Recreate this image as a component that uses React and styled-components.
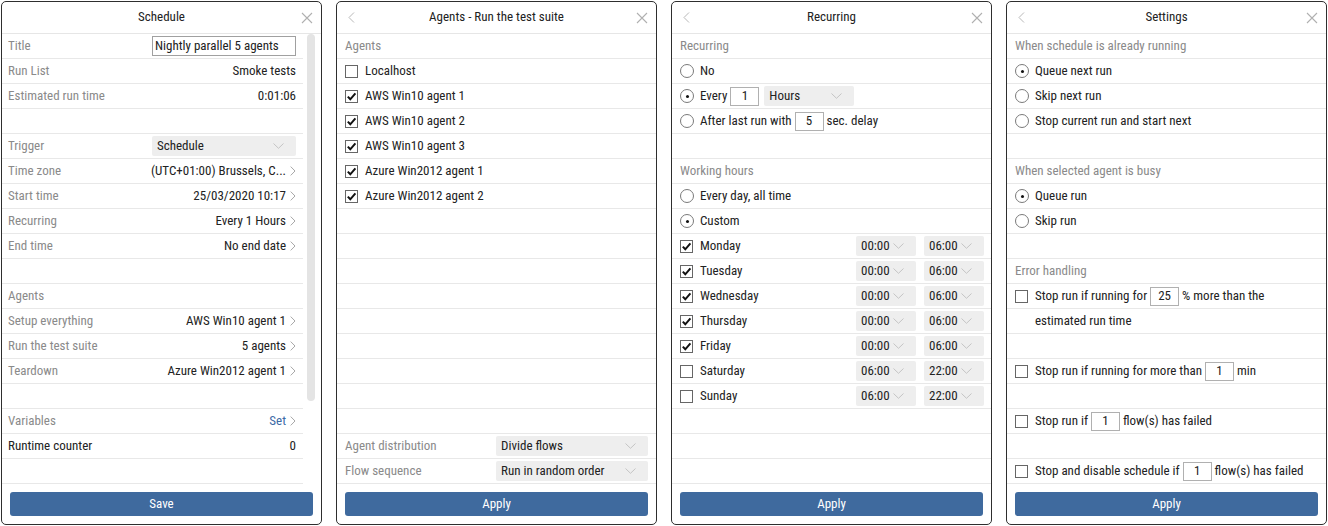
import styled, { createGlobalStyle } from 'styled-components';

const GlobalStyle = createGlobalStyle`
  body {
    margin: 0;
    background: #ffffff;
    font-family: "Roboto Condensed", Roboto, sans-serif;
    font-stretch: condensed;
    font-size: 13px;
    color: #222;
  }
`;

const CloseIcon = () => (
  <svg width="12" height="12" viewBox="0 0 12 12">
    <path d="M1 1 L11 11 M11 1 L1 11" stroke="#b0b0b0" strokeWidth="1.1" fill="none" />
  </svg>
);

const BackIcon = () => (
  <svg width="7" height="11" viewBox="0 0 7 11">
    <path d="M6 0.5 L1 5.5 L6 10.5" stroke="#b8b8b8" strokeWidth="1" fill="none" />
  </svg>
);

const RightIcon = () => (
  <svg width="6" height="10" viewBox="0 0 6 10">
    <path d="M0.7 0.6 L5 5 L0.7 9.4" stroke="#a8a8a8" strokeWidth="1" fill="none" />
  </svg>
);

const DownIcon = () => (
  <svg width="11" height="6" viewBox="0 0 11 6">
    <path d="M0.5 0.5 L5.5 5.3 L10.5 0.5" stroke="#c4c4c4" strokeWidth="1" fill="none" />
  </svg>
);

const Check = () => (
  <svg width="11" height="11" viewBox="0 0 11 11">
    <path d="M1.8 5.6 L4.3 8.3 L9.4 2.4" stroke="#111" strokeWidth="2" fill="none" />
  </svg>
);

const Panel = ({ title, back, children, footer }) => (
  <Card>
    <Header>
      <IconSlot>{back && <BackIcon />}</IconSlot>
      <Title>{title}</Title>
      <IconSlot>
        <CloseIcon />
      </IconSlot>
    </Header>
    {children}
    <Footer>
      <Button>
        <Caption>{footer}</Caption>
      </Button>
    </Footer>
  </Card>
);

const Checkbox = ({ checked }) => <Box>{checked && <Check />}</Box>;
const Radio = ({ checked }) => <Circle>{checked && <Dot />}</Circle>;
const Select = ({ w, children }) => (
  <SelectBox $w={w}>
    <Caption>{children}</Caption>
    <DownIcon />
  </SelectBox>
);

const Empty = ({ n, ...p }) =>
  Array.from({ length: n }).map((_, i) => <Row key={i} {...p} />);

const ScheduleRow = ({ label, value, link, dark, arrow }) => (
  <Row $pl={6} $pr={7}>
    <Label $dark={dark}>{label}</Label>
    <Value $link={link}>
      <Caption>{value}</Caption>
      {arrow && <RightIcon />}
    </Value>
  </Row>
);

const SchedulePanel = () => (
  <Panel title="Schedule" footer="Save">
    <Body>
      <List>
        <Row $pl={6} $pr={7}>
          <Label>Title</Label>
          <TextInput>
            <Caption>Nightly parallel 5 agents</Caption>
          </TextInput>
        </Row>
        <ScheduleRow label="Run List" value="Smoke tests" />
        <ScheduleRow label="Estimated run time" value="0:01:06" />
        <Row />
        <Row $pl={6} $pr={7}>
          <Label>Trigger</Label>
          <Select w={144}>Schedule</Select>
        </Row>
        <ScheduleRow label="Time zone" value="(UTC+01:00) Brussels, C..." arrow />
        <ScheduleRow label="Start time" value="25/03/2020 10:17" arrow />
        <ScheduleRow label="Recurring" value="Every 1 Hours" arrow />
        <ScheduleRow label="End time" value="No end date" arrow />
        <Row />
        <Row $pl={6}>
          <Label>Agents</Label>
        </Row>
        <ScheduleRow label="Setup everything" value="AWS Win10 agent 1" arrow />
        <ScheduleRow label="Run the test suite" value="5 agents" arrow />
        <ScheduleRow label="Teardown" value="Azure Win2012 agent 1" arrow />
        <Row />
        <ScheduleRow label="Variables" value="Set" link arrow />
        <ScheduleRow label="Runtime counter" value="0" dark />
        <Row />
      </List>
      <ScrollTrack>
        <Thumb />
      </ScrollTrack>
    </Body>
  </Panel>
);

const agents = [
  ['Localhost', false],
  ['AWS Win10 agent 1', true],
  ['AWS Win10 agent 2', true],
  ['AWS Win10 agent 3', true],
  ['Azure Win2012 agent 1', true],
  ['Azure Win2012 agent 2', true],
];

const AgentsPanel = () => (
  <Panel title="Agents - Run the test suite" back footer="Apply">
    <List>
      <Row>
        <Label>Agents</Label>
      </Row>
      {agents.map(([name, on]) => (
        <Row key={name}>
          <Checkbox checked={on} />
          <Text>{name}</Text>
        </Row>
      ))}
      <Empty n={9} />
      <Row>
        <Label>Agent distribution</Label>
        <Select w={152}>Divide flows</Select>
      </Row>
      <Row>
        <Label>Flow sequence</Label>
        <Select w={152}>Run in random order</Select>
      </Row>
    </List>
  </Panel>
);

const days = [
  ['Monday', true, '00:00', '06:00'],
  ['Tuesday', true, '00:00', '06:00'],
  ['Wednesday', true, '00:00', '06:00'],
  ['Thursday', true, '00:00', '06:00'],
  ['Friday', true, '00:00', '06:00'],
  ['Saturday', false, '06:00', '22:00'],
  ['Sunday', false, '06:00', '22:00'],
];

const RecurringPanel = () => (
  <Panel title="Recurring" back footer="Apply">
    <List>
      <Row>
        <Label>Recurring</Label>
      </Row>
      <Row>
        <Radio />
        <Text>No</Text>
      </Row>
      <Row>
        <Radio checked />
        <Text>Every</Text>
        <NumBox>
          <Caption>1</Caption>
        </NumBox>
        <Gap />
        <Select w={90}>Hours</Select>
      </Row>
      <Row>
        <Radio />
        <Text>After last run with</Text>
        <NumBox>
          <Caption>5</Caption>
        </NumBox>
        <Text>sec. delay</Text>
      </Row>
      <Row />
      <Row>
        <Label>Working hours</Label>
      </Row>
      <Row>
        <Radio />
        <Text>Every day, all time</Text>
      </Row>
      <Row>
        <Radio checked />
        <Text>Custom</Text>
      </Row>
      {days.map(([day, on, from, to]) => (
        <Row key={day} $pr={7}>
          <Checkbox checked={on} />
          <Text $grow>{day}</Text>
          <TimePair>
            <Select w={60}>{from}</Select>
            <Select w={60}>{to}</Select>
          </TimePair>
        </Row>
      ))}
      <Empty n={3} />
    </List>
  </Panel>
);

const Inline = ({ before, value, after }) => (
  <>
    <Checkbox />
    <Text>{before}</Text>
    <NumBox>
      <Caption>{value}</Caption>
    </NumBox>
    <Text>{after}</Text>
  </>
);

const SettingsPanel = () => (
  <Panel title="Settings" back footer="Apply">
    <List>
      <Row>
        <Label>When schedule is already running</Label>
      </Row>
      <Row>
        <Radio checked />
        <Text>Queue next run</Text>
      </Row>
      <Row>
        <Radio />
        <Text>Skip next run</Text>
      </Row>
      <Row>
        <Radio />
        <Text>Stop current run and start next</Text>
      </Row>
      <Row />
      <Row>
        <Label>When selected agent is busy</Label>
      </Row>
      <Row>
        <Radio checked />
        <Text>Queue run</Text>
      </Row>
      <Row>
        <Radio />
        <Text>Skip run</Text>
      </Row>
      <Row />
      <Row>
        <Label>Error handling</Label>
      </Row>
      <Row>
        <Inline before="Stop run if running for" value="25" after="% more than the" />
      </Row>
      <Row $pl={28}>
        <Text>estimated run time</Text>
      </Row>
      <Row />
      <Row>
        <Inline before="Stop run if running for more than" value="1" after="min" />
      </Row>
      <Row />
      <Row>
        <Inline before="Stop run if" value="1" after="flow(s) has failed" />
      </Row>
      <Row />
      <Row>
        <Inline before="Stop and disable schedule if" value="1" after="flow(s) has failed" />
      </Row>
    </List>
  </Panel>
);

export default function App() {
  return (
    <>
      <GlobalStyle />
      <Page>
        <SchedulePanel />
        <AgentsPanel />
        <RecurringPanel />
        <SettingsPanel />
      </Page>
    </>
  );
}

const Page = styled.div`
  display: flex;
  gap: 14px;
  padding: 1px 0 0 1px;
`;

const Card = styled.div`
  width: 321px;
  height: 524px;
  box-sizing: border-box;
  border: 1px solid #2e2e2e;
  border-radius: 5px;
  display: flex;
  flex-direction: column;
  overflow: hidden;
  background: #fff;
`;

const Header = styled.div`
  height: 31px;
  flex: none;
  border-bottom: 1px solid #e6e6e6;
  display: grid;
  grid-template-columns: 28px 1fr 28px;
  align-items: center;
`;

const IconSlot = styled.div`
  display: flex;
  justify-content: center;
  align-items: center;
`;

const Title = styled.div`
  text-align: center;
  color: #222;
  margin-bottom: 3px;
`;

const Body = styled.div`
  display: flex;
  flex: 1;
`;

const List = styled.div`
  flex: 1;
  display: flex;
  flex-direction: column;
`;

const ScrollTrack = styled.div`
  width: 18px;
  flex: none;
  padding-left: 4px;
  box-sizing: border-box;
`;

const Thumb = styled.div`
  width: 8px;
  height: 367px;
  border-radius: 4px;
  background: #e4e4e4;
`;

const Row = styled.div`
  height: 24px;
  flex: none;
  border-bottom: 1px solid #e8e8e8;
  display: flex;
  align-items: center;
  padding: 0 ${(p) => p.$pr ?? 8}px 0 ${(p) => p.$pl ?? 8}px;
  white-space: nowrap;
`;

const Caption = styled.span`
  display: block;
  margin-bottom: 2px;
`;

const Label = styled.div`
  flex: 1;
  margin-bottom: 2px;
  color: ${(p) => (p.$dark ? '#222' : '#8a8a8a')};
`;

const Value = styled.div`
  display: flex;
  align-items: center;
  gap: 4px;
  color: ${(p) => (p.$link ? '#3d6aa6' : '#222')};
`;

const Text = styled.span`
  color: #222;
  margin-bottom: 2px;
  flex: ${(p) => (p.$grow ? 1 : 'none')};
`;

const TextInput = styled.div`
  width: 144px;
  height: 20px;
  box-sizing: border-box;
  border: 1px solid #a0a0a0;
  padding: 0 2px;
  display: flex;
  align-items: center;
  color: #222;
`;

const SelectBox = styled.div`
  width: ${(p) => p.$w}px;
  height: 20px;
  box-sizing: border-box;
  background: #eeeeee;
  border-radius: 2px;
  padding: 0 12px 0 5px;
  display: flex;
  align-items: center;
  justify-content: space-between;
  color: #222;
`;

const TimePair = styled.div`
  display: flex;
  gap: 8px;
`;

const NumBox = styled.div`
  width: 29px;
  height: 19px;
  box-sizing: border-box;
  border: 1px solid #b0b0b0;
  margin: 0 3px;
  display: flex;
  align-items: center;
  justify-content: center;
  color: #222;
`;

const Gap = styled.span`
  width: 2px;
`;

const Box = styled.div`
  width: 13px;
  height: 13px;
  box-sizing: border-box;
  border: 1px solid #666;
  margin-right: 7px;
  display: flex;
  align-items: center;
  justify-content: center;
  flex: none;
`;

const Circle = styled.div`
  width: 14px;
  height: 14px;
  box-sizing: border-box;
  border: 1px solid #7a7a7a;
  border-radius: 50%;
  margin-right: 6px;
  display: flex;
  align-items: center;
  justify-content: center;
  flex: none;
`;

const Dot = styled.div`
  width: 3px;
  height: 3px;
  border-radius: 50%;
  background: #111;
`;

const Footer = styled.div`
  height: 40px;
  flex: none;
  padding: 8px 8px;
  box-sizing: border-box;
  margin-top: auto;
`;

const Button = styled.div`
  height: 24px;
  border-radius: 3px;
  background: #3f6a9e;
  color: #fff;
  display: flex;
  align-items: center;
  justify-content: center;
`;
